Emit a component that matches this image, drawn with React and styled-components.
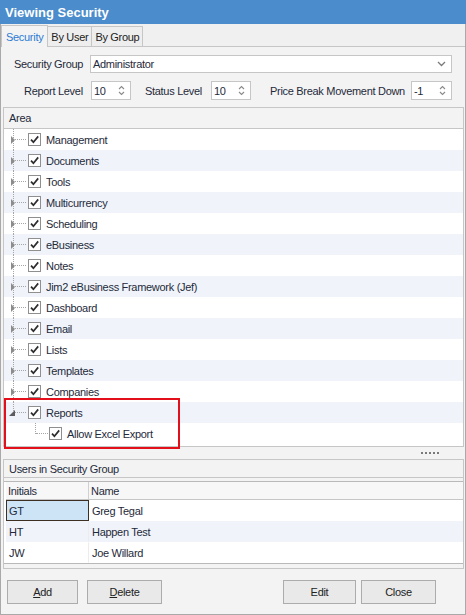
import React from "react";
import styled, { createGlobalStyle } from "styled-components";

const font = `"Liberation Sans", Arial, sans-serif`;

const GlobalStyle = createGlobalStyle`
  html, body { margin: 0; padding: 0; background: #fff; }
  body { font-family: ${font}; font-size: 11px; color: #1f2a3a; }
  * { box-sizing: border-box; }
`;

const Window = styled.div`
  width: 466px;
  height: 615px;
  display: flex;
  flex-direction: column;
  border: 1px solid #a9a9a9;
  border-top: none;
  background: #f3f3f3;
  letter-spacing: -0.3px;
`;

const TitleBar = styled.div`
  height: 24px;
  flex: none;
  display: flex;
  align-items: center;
  padding-left: 5px;
  margin: 0 -1px;
  background: #4a8ccc;
  color: #fff;
  font-weight: bold;
  font-size: 13px;
  letter-spacing: 0;
`;

const TabStrip = styled.div`
  height: 23px;
  flex: none;
  display: flex;
  align-items: flex-end;
  border-bottom: 1px solid #c6c6c6;
  background: #f0f0f0;
`;

const Tab = styled.div`
  height: ${({ $active }) => ($active ? "22px" : "20px")};
  margin-bottom: ${({ $active }) => ($active ? "-1px" : "0")};
  margin-left: ${({ $active }) => ($active ? "0" : "-1px")};
  padding: 0 ${({ $active }) => ($active ? "4px" : "3px")};
  display: flex;
  align-items: center;
  border: 1px solid #c6c6c6;
  border-bottom: none;
  background: ${({ $active }) => ($active ? "#f3f3f3" : "#eeeeee")};
  color: ${({ $active }) => ($active ? "#2b7bd3" : "#222")};
  position: relative;
  z-index: ${({ $active }) => ($active ? 1 : 0)};
  &:first-child { margin-left: 0; }
`;

const Body = styled.div`
  flex: 1;
  display: flex;
  flex-direction: column;
  min-height: 0;
`;

const Form = styled.div`
  display: flex;
  flex-direction: column;
  gap: 8px;
  padding: 8px 0 7px 0;
`;

const FormRow = styled.div`
  display: flex;
  align-items: center;
  padding-left: ${({ $indent }) => $indent}px;
  padding-right: 13px;
`;

const Label = styled.span`
  width: ${({ $width }) => $width}px;
  margin-left: ${({ $gap }) => $gap || 0}px;
  flex: none;
  white-space: nowrap;
`;

const Combo = styled.div`
  flex: 1;
  height: 18px;
  display: flex;
  align-items: center;
  justify-content: space-between;
  padding: 0 5px 0 2px;
  background: #fff;
  border: 1px solid #c6c6c6;
`;

const Spinner = styled.div`
  width: ${({ $width }) => $width || 40}px;
  height: 19px;
  flex: none;
  display: flex;
  align-items: center;
  justify-content: space-between;
  padding: 0 5px 0 2px;
  background: #fff;
  border: 1px solid #c6c6c6;
`;

const Group = styled.div`
  display: flex;
  flex-direction: column;
  margin: 0 1px 0 2px;
  border: 1px solid #c6c6c6;
  flex: ${({ $grow }) => ($grow ? 1 : "none")};
  min-height: 0;
`;

const GroupHeader = styled.div`
  height: ${({ $h }) => $h}px;
  flex: none;
  display: flex;
  align-items: center;
  padding-left: 5px;
  border-bottom: 1px solid #c6c6c6;
`;

const Tree = styled.div`
  flex: 1;
  position: relative;
  background: #fff;
`;

const TreeRow = styled.div`
  height: 21px;
  display: flex;
  align-items: center;
  padding-left: ${({ $level }) => $level * 21}px;
  background: ${({ $alt }) => ($alt ? "#f0f4fa" : "#fff")};
`;

const Gutter = styled.span`
  position: relative;
  width: 24px;
  height: 100%;
  flex: none;
  &::before {
    content: "";
    position: absolute;
    left: ${({ $level }) => ($level ? 10 : 9)}px;
    top: 0;
    bottom: ${({ $last }) => ($last ? "50%" : "0")};
    border-left: 1px dotted #a6a6a6;
  }
  &::after {
    content: "";
    position: absolute;
    left: 11px;
    width: ${({ $level }) => ($level ? 12 : 11)}px;
    top: 10px;
    border-top: 1px dotted #a6a6a6;
  }
`;

const Expander = styled.span`
  position: absolute;
  z-index: 1;
  width: 0;
  height: 0;
  border-style: solid;
  ${({ $open }) =>
    $open
      ? `left: 5px; top: 8px; border-width: 0 0 6px 6px; border-color: transparent transparent #5c5c5c transparent;`
      : `left: 7px; top: 6.5px; border-width: 4px 0 4px 4.5px; border-color: transparent transparent transparent #8c8c8c;`}
`;

const CheckBox = styled.span`
  width: 13px;
  height: 13px;
  flex: none;
  display: flex;
  align-items: center;
  justify-content: center;
  border: 1px solid #8f8f8f;
  background: #fff;
  margin-right: 5px;
`;

const Highlight = styled.div`
  position: absolute;
  left: 0;
  top: 269px;
  width: 176px;
  height: 51px;
  border: 2px solid #e3101b;
  pointer-events: none;
`;

const Splitter = styled.div`
  height: 12px;
  flex: none;
  display: flex;
  align-items: center;
  justify-content: flex-end;
  padding-right: 26px;
`;

const Grip = styled.span`
  width: 18px;
  height: 2px;
  background-image: linear-gradient(to right, #7a7a7a 2px, transparent 2px);
  background-size: 4px 2px;
`;

const Grid = styled.div`
  margin: 3px 0 4px;
  border-top: 1px solid #b9b9b9;
  border-bottom: 1px solid #b9b9b9;
  padding-left: 2px;
  background: #fff;
`;

const GridHeader = styled.div`
  display: grid;
  grid-template-columns: 83px 1fr;
  height: 18px;
  border-bottom: 1px solid #c6c6c6;
  background: #f7f7f7;
`;

const HeadCell = styled.div`
  display: flex;
  align-items: center;
  padding-left: 2px;
  border-right: ${({ $sep }) => ($sep ? "1px solid #d0d0d0" : "none")};
`;

const GridRow = styled.div`
  display: grid;
  grid-template-columns: 83px 1fr;
  height: 21px;
  background: ${({ $alt }) => ($alt ? "#f0f4fa" : "#fff")};
`;

const Cell = styled.div`
  display: flex;
  align-items: center;
  padding-left: 2px;
  border: 1px solid ${({ $selected }) => ($selected ? "#3d2f22" : "transparent")};
  border-right-color: ${({ $selected, $sep }) =>
    $selected ? "#3d2f22" : $sep ? "#ececec" : "transparent"};
  background: ${({ $selected }) => ($selected ? "#cde4f7" : "transparent")};
  color: #1f2a3a;
`;

const ButtonBar = styled.div`
  height: 45px;
  flex: none;
  display: flex;
  align-items: flex-start;
  gap: 9px;
  padding: 11px 29px 0 6px;
`;

const Button = styled.button`
  width: ${({ $width }) => $width}px;
  height: 24px;
  margin-left: ${({ $push }) => ($push ? "auto" : "0")};
  margin-right: ${({ $tight }) => ($tight ? "-4px" : "0")};
  font-family: ${font};
  font-size: 11px;
  letter-spacing: -0.3px;
  color: #222;
  background: #e9e9e9;
  border: 1px solid #acacac;
  padding: 0;
  u { text-decoration: underline; }
`;

const Chevron = () => (
  <svg width="9" height="6" viewBox="0 0 9 6">
    <polyline points="1,1 4.5,4.5 8,1" fill="none" stroke="#7a7a7a" strokeWidth="1.3" />
  </svg>
);

const SpinArrows = () => (
  <svg width="7" height="11" viewBox="0 0 7 11">
    <polyline points="1,4 3.5,1.5 6,4" fill="none" stroke="#8a8a8a" strokeWidth="1.1" />
    <polyline points="1,7 3.5,9.5 6,7" fill="none" stroke="#8a8a8a" strokeWidth="1.1" />
  </svg>
);

const Check = () => (
  <svg width="11" height="11" viewBox="0 0 11 11">
    <path d="M2 5.6 L4.4 8.2 L9.2 2.4" fill="none" stroke="#2d2d2d" strokeWidth="1.7" />
  </svg>
);

const areas = [
  "Management",
  "Documents",
  "Tools",
  "Multicurrency",
  "Scheduling",
  "eBusiness",
  "Notes",
  "Jim2 eBusiness Framework (Jef)",
  "Dashboard",
  "Email",
  "Lists",
  "Templates",
  "Companies",
];

const users = [
  { initials: "GT", name: "Greg Tegal" },
  { initials: "HT", name: "Happen Test" },
  { initials: "JW", name: "Joe Willard" },
];

function AreaRow({ label, index, level = 0, open, last }) {
  return (
    <TreeRow $alt={index % 2 === 1} $level={level}>
      <Gutter $level={level} $last={last || level > 0}>
        {level === 0 && <Expander $open={open} />}
      </Gutter>
      <CheckBox>
        <Check />
      </CheckBox>
      <span>{label}</span>
    </TreeRow>
  );
}

export default function App() {
  return (
    <>
      <GlobalStyle />
      <Window>
        <TitleBar>Viewing Security</TitleBar>
        <TabStrip>
          <Tab $active>Security</Tab>
          <Tab>By User</Tab>
          <Tab>By Group</Tab>
        </TabStrip>
        <Body>
          <Form>
            <FormRow $indent={13}>
              <Label $width={76}>Security Group</Label>
              <Combo>
                <span>Administrator</span>
                <Chevron />
              </Combo>
            </FormRow>
            <FormRow $indent={23}>
              <Label $width={67}>Report Level</Label>
              <Spinner>
                <span>10</span>
                <SpinArrows />
              </Spinner>
              <Label $width={66} $gap={14}>Status Level</Label>
              <Spinner>
                <span>10</span>
                <SpinArrows />
              </Spinner>
              <Label $width={141} $gap={19}>Price Break Movement Down</Label>
              <Spinner $width={41}>
                <span>-1</span>
                <SpinArrows />
              </Spinner>
            </FormRow>
          </Form>

          <Group $grow>
            <GroupHeader $h={21}>Area</GroupHeader>
            <Tree>
              {areas.map((a, i) => (
                <AreaRow key={a} label={a} index={i} />
              ))}
              <AreaRow label="Reports" index={13} open last />
              <AreaRow label="Allow Excel Export" index={14} level={1} />
              <Highlight />
            </Tree>
          </Group>

          <Splitter>
            <Grip />
          </Splitter>

          <Group>
            <GroupHeader $h={18}>Users in Security Group</GroupHeader>
            <Grid>
              <GridHeader>
                <HeadCell $sep>Initials</HeadCell>
                <HeadCell>Name</HeadCell>
              </GridHeader>
              {users.map((u, i) => (
                <GridRow key={u.initials} $alt={i === 1}>
                  <Cell $selected={i === 0} $sep>{u.initials}</Cell>
                  <Cell>{u.name}</Cell>
                </GridRow>
              ))}
            </Grid>
          </Group>

          <ButtonBar>
            <Button $width={71}>
              <u>A</u>dd
            </Button>
            <Button $width={75}>
              <u>D</u>elete
            </Button>
            <Button $width={73} $push $tight>
              Edit
            </Button>
            <Button $width={75}>Close</Button>
          </ButtonBar>
        </Body>
      </Window>
    </>
  );
}
